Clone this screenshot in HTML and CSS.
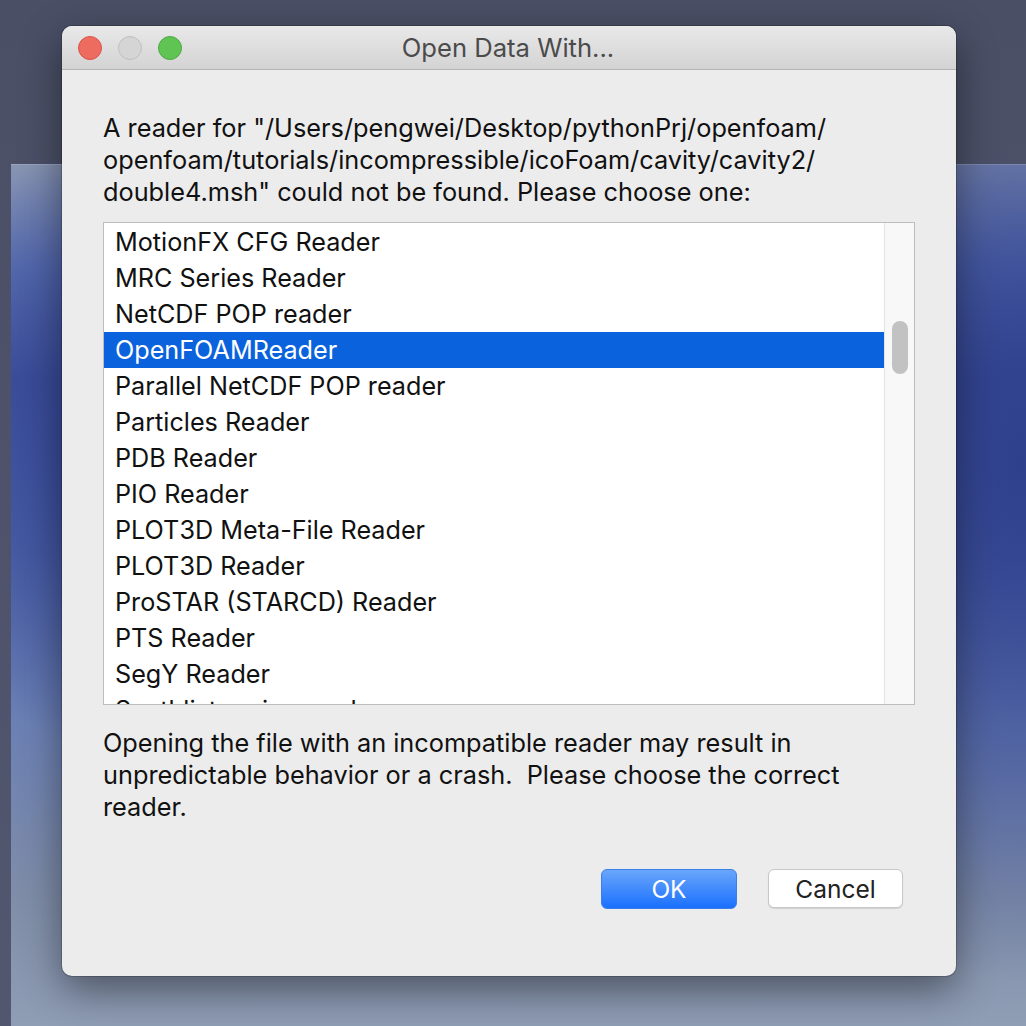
FILE: index.html
```html
<!DOCTYPE html>
<html>
<head>
<meta charset="utf-8">
<link rel="stylesheet" href="styles.css">
</head>
<body>
<div class="desktop">
  <div class="bgwindow"></div>
  <div class="dialog">
    <div class="titlebar">
      <div class="lights">
        <span class="light red"></span>
        <span class="light gray"></span>
        <span class="light green"></span>
      </div>
      <div class="title">Open Data With...</div>
    </div>
    <div class="content">
      <p class="msg">A reader for "/Users/pengwei/Desktop/pythonPrj/openfoam/<br>openfoam/tutorials/incompressible/icoFoam/cavity/cavity2/<br>double4.msh" could not be found. Please choose one:</p>
      <div class="listbox">
        <ul class="items">
          <li>MotionFX CFG Reader</li>
          <li>MRC Series Reader</li>
          <li>NetCDF POP reader</li>
          <li class="selected">OpenFOAMReader</li>
          <li>Parallel NetCDF POP reader</li>
          <li>Particles Reader</li>
          <li>PDB Reader</li>
          <li>PIO Reader</li>
          <li>PLOT3D Meta-File Reader</li>
          <li>PLOT3D Reader</li>
          <li>ProSTAR (STARCD) Reader</li>
          <li>PTS Reader</li>
          <li>SegY Reader</li>
          <li>Synthlist series reader</li>
        </ul>
        <div class="scrollbar"><div class="thumb"></div></div>
      </div>
      <p class="warn">Opening the file with an incompatible reader may result in<br>unpredictable behavior or a crash.&nbsp; Please choose the correct<br>reader.</p>
      <div class="buttons">
        <button class="btn ok">OK</button>
        <button class="btn cancel">Cancel</button>
      </div>
    </div>
  </div>
</div>
</body>
</html>
```

FILE: styles.css
```css
* { box-sizing: border-box; }
html, body { margin: 0; padding: 0; }
body {
  width: 1026px;
  height: 1026px;
  overflow: hidden;
  background: #4f546b;
  font-family: Inter, "Liberation Sans", sans-serif;
}
.desktop {
  position: relative;
  width: 1026px;
  height: 1026px;
  background: linear-gradient(180deg, #4a4f66 0%, #525770 100%);
}
.bgwindow {
  position: absolute;
  left: 11px;
  top: 164px;
  right: 0;
  bottom: 0;
  background:
    radial-gradient(ellipse 260px 520px at 1010px 300px, rgba(45,62,140,0.95), rgba(45,62,140,0) 100%),
    radial-gradient(ellipse 120px 300px at 60px 280px, rgba(50,68,150,0.7), rgba(50,68,150,0) 100%),
    linear-gradient(180deg, #8895b2 0%, #5a6fb0 12%, #3f5199 25%, #4d62a6 45%, #6b80b4 65%, #7f8da8 85%, #8f9db5 100%);
  box-shadow: inset 0 1px 0 rgba(255,255,255,0.15);
}
.dialog {
  position: absolute;
  left: 62px;
  top: 26px;
  width: 894px;
  height: 950px;
  background: #ececec;
  border-radius: 10px;
  overflow: hidden;
  box-shadow: 0 0 0 1px rgba(0,0,0,0.18), 0 14px 40px rgba(0,0,0,0.45);
  display: flex;
  flex-direction: column;
}
.titlebar {
  position: relative;
  height: 44px;
  flex: none;
  background: linear-gradient(180deg, #e9e9e9 0%, #d3d3d3 100%);
  border-bottom: 1px solid #b4b4b4;
  display: flex;
  align-items: center;
}
.lights {
  display: flex;
  gap: 16px;
  padding-left: 16px;
}
.light {
  width: 24px;
  height: 24px;
  border-radius: 50%;
  display: block;
}
.red { background: #ee6b5f; border: 1px solid #d8544a; }
.gray { background: #d5d5d5; border: 1px solid #bfbfbf; }
.green { background: #5fc454; border: 1px solid #4ea944; }
.title {
  position: absolute;
  left: 0;
  right: 0;
  top: 0;
  bottom: 0;
  display: flex;
  align-items: center;
  justify-content: center;
  font-size: 25.6px;
  color: #4b4b4b;
  padding-right: 2px;
}
.content {
  flex: 1;
  padding: 42px 53px 0 41px;
  display: flex;
  flex-direction: column;
}
.msg, .warn {
  margin: 0;
  font-size: 25.3px;
  line-height: 32px;
  color: #111;
  white-space: nowrap;
}
.listbox {
  margin-top: 14px;
  width: 812px;
  height: 483px;
  background: #fff;
  border: 1px solid #bdbdbd;
  display: flex;
  overflow: hidden;
}
.items {
  list-style: none;
  margin: 0;
  padding: 1px 0 0 0;
  flex: 1;
  overflow: hidden;
}
.items li {
  height: 36px;
  line-height: 36px;
  padding-left: 11px;
  font-size: 25.2px;
  color: #111;
  white-space: nowrap;
}
.items li.selected {
  background: #0a63dc;
  color: #fff;
}
.scrollbar {
  width: 30px;
  flex: none;
  background: #f8f8f8;
  border-left: 1px solid #e4e4e4;
  padding: 98px 0 0 7px;
}
.thumb {
  width: 16px;
  height: 53px;
  border-radius: 8px;
  background: #c2c2c2;
}
.warn {
  margin-top: 22px;
}
.buttons {
  margin-top: 46px;
  display: flex;
  justify-content: flex-end;
  gap: 31px;
}
.btn {
  font-family: Inter, "Liberation Sans", sans-serif;
  font-size: 24.5px;
  height: 40px;
  border-radius: 6px;
  padding: 0;
}
.ok {
  width: 136px;
  color: #fff;
  border: 1px solid #3d7fe8;
  background: linear-gradient(180deg, #6aa6fb 0%, #1a70fe 100%);
}
.cancel {
  width: 135px;
  height: 39px;
  color: #222;
  background: #fff;
  border: 1px solid #c8c8c8;
  box-shadow: 0 1px 1px rgba(0,0,0,0.12);
}
```
